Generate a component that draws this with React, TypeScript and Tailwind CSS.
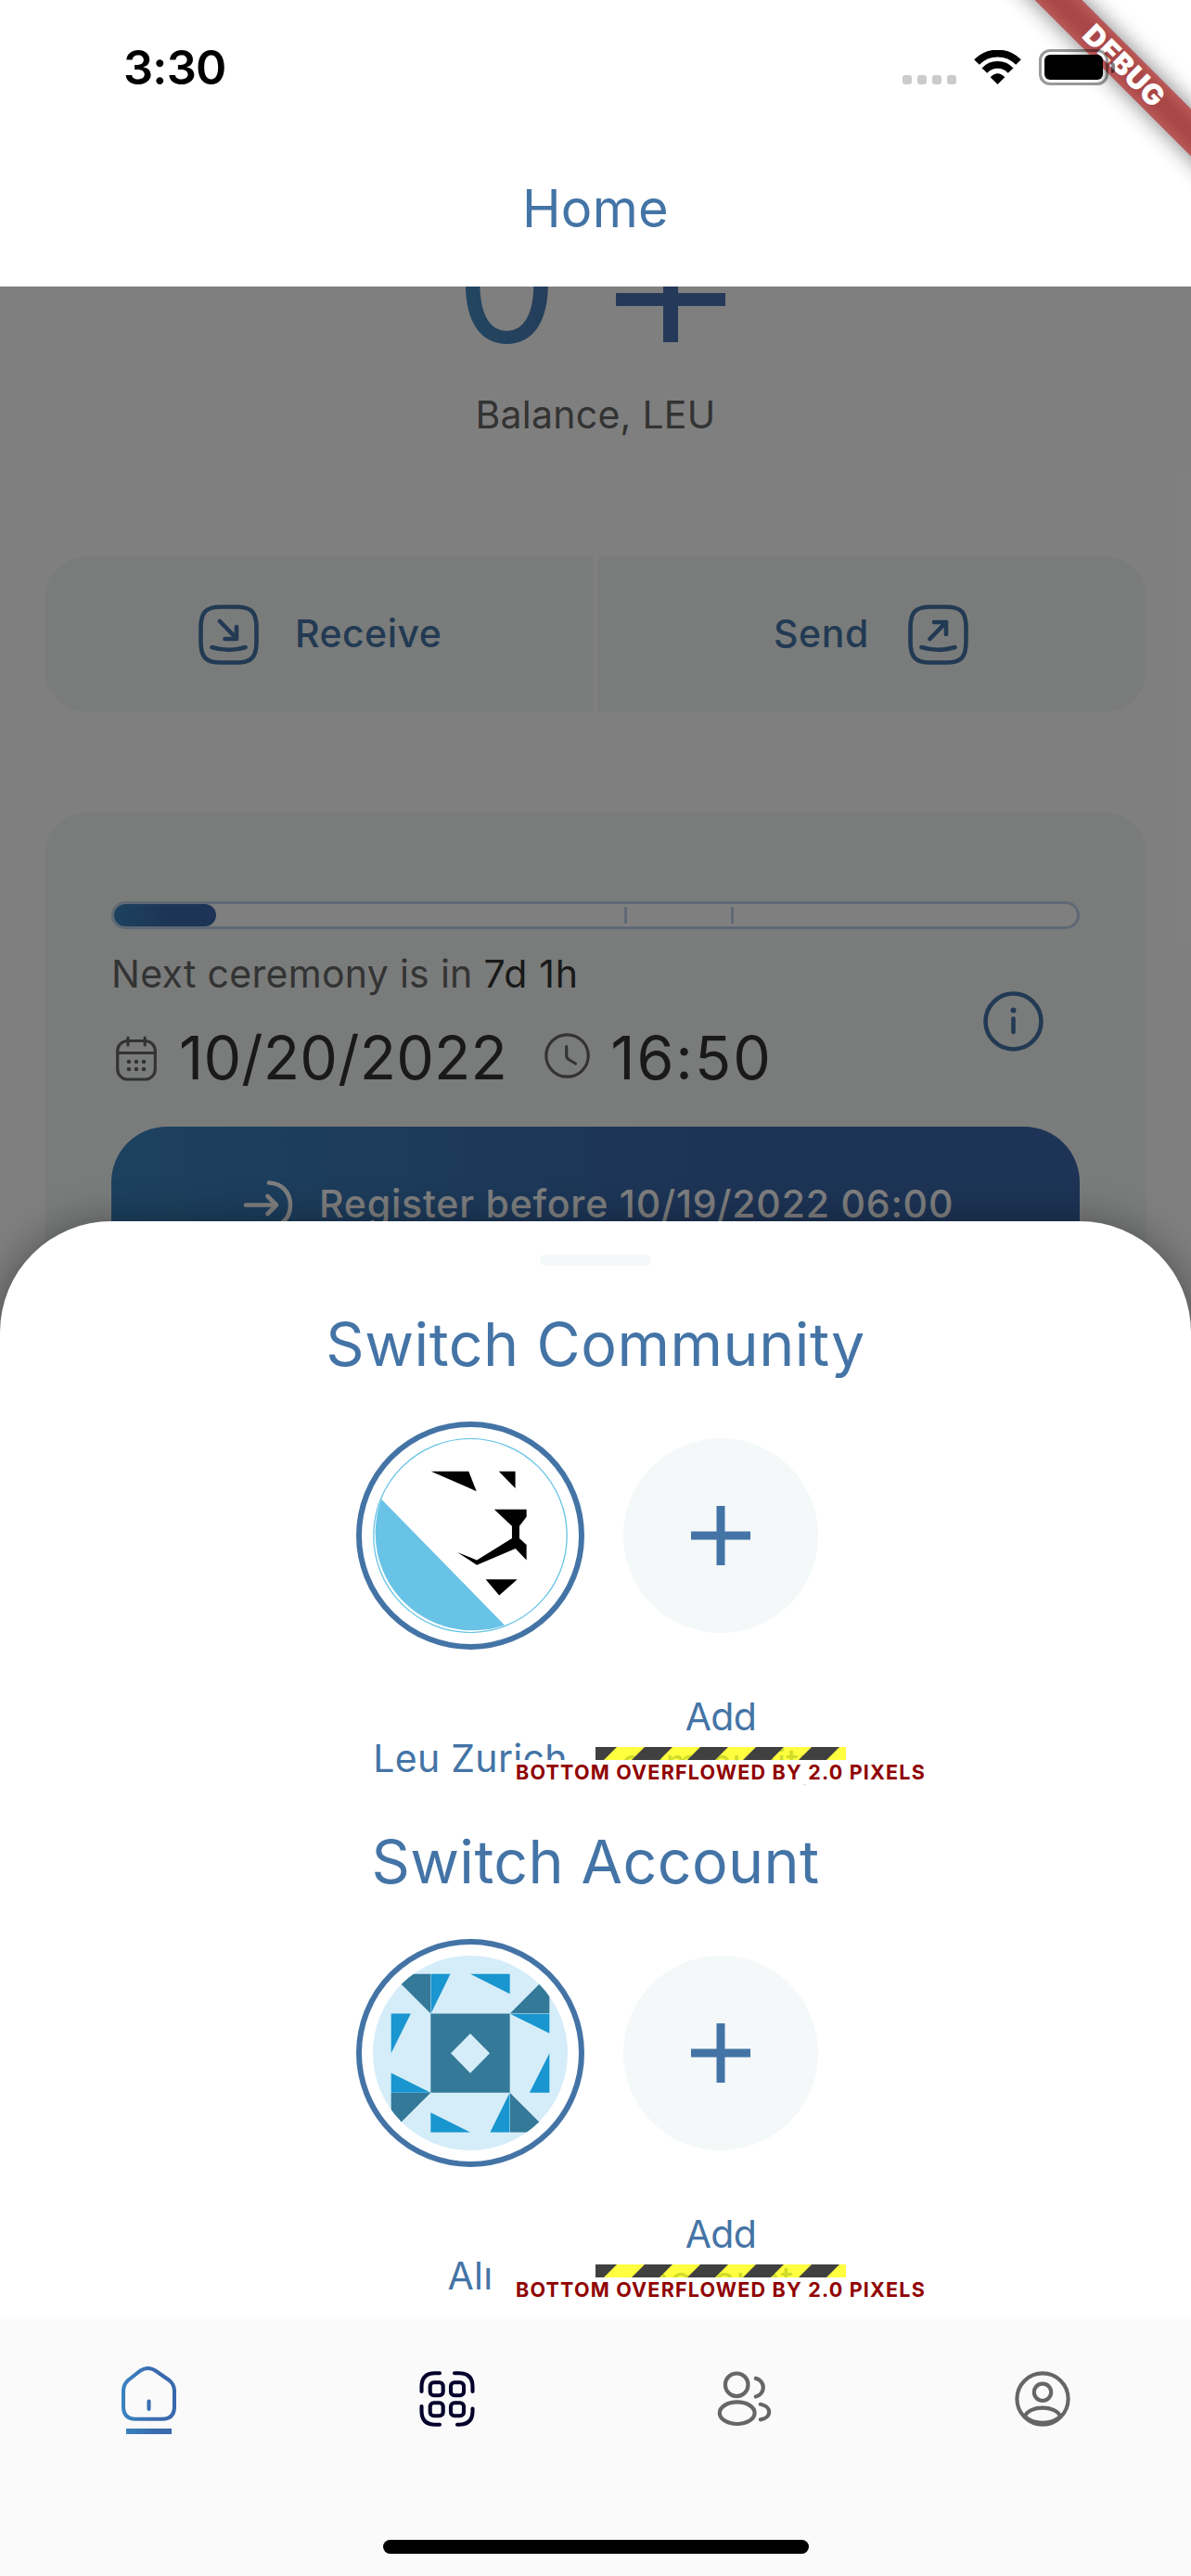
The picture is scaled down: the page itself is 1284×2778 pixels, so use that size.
import React from 'react';

function StatusBar() {
  return (
    <div className="flex h-[144px] items-start justify-between pl-[133px] pr-[82px]">
      <span className="mt-[43px] text-[50.5px] leading-[60px] font-semibold tracking-[-0.8px] text-black">3:30</span>
      <div className="mt-[53px] flex">
        <div className="mt-[28px] flex gap-[6px]">
          {[0, 1, 2, 3].map((i) => (
            <span key={i} className="size-[10px] rounded-[3px] bg-[#cbcbcb]" />
          ))}
        </div>
        <svg className="mt-px ml-[19px] h-[37px] w-[51px]" viewBox="0 0 51 37" fill="none" stroke="#000" strokeWidth="7.8">
          <path d="M3 13 A31.4 31.4 0 0 1 48 13" />
          <path d="M11.4 22.1 A19.2 19.2 0 0 1 39.6 22.1" />
          <path d="M25.5 37 L17.7 29.2 Q25.5 21.5 33.3 29.2 Z" fill="#000" stroke="none" />
        </svg>
        <div className="ml-[19px] flex h-[39px] w-[75px] rounded-[12px] border-3 border-black/40 p-[3px]">
          <span className="flex-1 rounded-[6px] bg-black" />
        </div>
        <span className="mt-[14px] ml-[3px] h-[12px] w-[4px] rounded-r-full bg-black/50" />
      </div>
    </div>
  );
}

function DebugBanner() {
  return (
    <div className="absolute top-0 right-0 size-[284px] overflow-hidden">
      <div className="absolute top-[53px] left-[12px] h-[36px] w-[400px] rotate-45 bg-black/50 blur-[12px]" />
      <div className="absolute top-[53px] left-[12px] h-[36px] w-[400px] rotate-45 bg-[#b71c1c]/63 text-center text-[31px] leading-[36px] font-black tracking-[0.5px] text-white">
        DEBUG
      </div>
    </div>
  );
}

function TransferIcon({ arrow }: { arrow: string }) {
  return (
    <svg className="size-[65px]" viewBox="0 0 65 65" fill="none" stroke="#4474a6" strokeWidth="4.6" strokeLinecap="round" strokeLinejoin="round">
      <path d="M2.5 25 C2.5 8 8 2.5 24 2.5 H41 C57 2.5 62.5 8 62.5 25 V40 C62.5 57 57 62.5 41 62.5 H24 C8 62.5 2.5 57 2.5 40 Z" />
      <path d={arrow} />
      <path d="M14.5 46 Q32.5 51.5 50.5 46" />
    </svg>
  );
}

function Background() {
  return (
    <div className="flex flex-col px-12">
      <div className="-mt-[82px] flex h-[164px] items-center justify-center gap-[63px] pr-[10px]">
        <span className="-mt-[7px] bg-linear-to-r from-[#448dc2] to-[#4a7cb6] bg-clip-text text-[174px] leading-[174px] text-transparent">0</span>
        <svg className="h-[120px] w-[118px]" viewBox="0 0 118 120" fill="#4a72b2">
          <path d="M51 0 H67 V67 H118 V81 H67 V120 H51 V81 H0 V67 H51 Z" />
        </svg>
      </div>
      <div className="mt-[31px] h-[50px] text-center text-[41px] leading-[50px] tracking-[0.25px] text-[#666]">Balance, LEU</div>

      <div className="mt-[128px] grid h-[168px] grid-cols-2 gap-[6px] text-[41px] font-medium text-[#4474a6]">
        <div className="flex items-center rounded-l-[45px] bg-[#f4f8f6] pl-[166px]">
          <TransferIcon arrow="M23 18 L41 36.5 M41 24 V37 H28.5" />
          <span className="-mt-px ml-[39px] tracking-[0.45px]">Receive</span>
        </div>
        <div className="flex items-center justify-end rounded-r-[45px] bg-[#f4f8f6] pr-[192px]">
          <span className="-mt-px mr-[42px] tracking-[0.6px]">Send</span>
          <TransferIcon arrow="M23.5 37 L41 19 M28 19 H41 V32" />
        </div>
      </div>

      <div className="mt-[108px] flex h-[900px] flex-col rounded-[45px] bg-[#f4f8f6] px-[72px] pt-[96px]">
        <div className="relative flex h-[30px] rounded-[15px] border-3 border-[#bed2e8] bg-white">
          <span className="w-[110px] rounded-[12px] bg-linear-to-r from-[#3983bf] to-[#3a69ad] to-55%" />
          <span className="absolute top-[3px] left-[550px] h-[18px] w-[3px] bg-[#bed2e8]" />
          <span className="absolute top-[3px] left-[665px] h-[18px] w-[3px] bg-[#bed2e8]" />
        </div>
        <div className="mt-[24px] flex h-[138px] justify-between">
          <div>
            <div className="-mt-px h-[51px] text-[41px] leading-[50px] tracking-[0.3px] text-[#666]">
              Next ceremony is in <span className="tracking-[0.7px] text-[#333]">7d 1h</span>
            </div>
            <div className="mt-[25px] flex h-[80px] items-center text-[64.5px] leading-[80px] text-[#333]">
              <svg className="ml-[5px] h-[49px] w-[44px]" viewBox="0 0 44 49" fill="none" stroke="#666" strokeWidth="3.2" strokeLinecap="round">
                <rect x="1.7" y="5.5" width="40.6" height="41.5" rx="11" />
                <path d="M2 18.5 H42 M13 2 V10 M31.2 2 V10" />
                <g fill="#666" stroke="none">
                  {[14, 22, 30].map((x) => (
                    <React.Fragment key={x}>
                      <circle cx={x} cy="28" r="2.3" />
                      <circle cx={x} cy="36" r="2.3" />
                    </React.Fragment>
                  ))}
                </g>
              </svg>
              <span className="ml-[24px] tracking-[0.2px]">10/20/2022</span>
              <svg className="-mt-[6px] ml-[40px] size-[49px]" viewBox="0 0 49 49" fill="none" stroke="#666" strokeWidth="3.2" strokeLinecap="round" strokeLinejoin="round">
                <circle cx="24.5" cy="24.5" r="22.7" />
                <path d="M23.7 14.5 V25 Q24 27 26 28.5 L33.5 33" />
              </svg>
              <span className="ml-[22px] tracking-[2px]">16:50</span>
            </div>
          </div>
          <svg className="mt-[43px] mr-[39px] size-[65px]" viewBox="0 0 65 65" fill="none" stroke="#4474a6" strokeWidth="4.6" strokeLinecap="round">
            <circle cx="32.5" cy="32.5" r="30" />
            <path d="M32.5 29.5 V44" />
            <circle cx="32.5" cy="20.5" r="3" fill="#4474a6" stroke="none" />
          </svg>
        </div>
        <div className="mt-[51px] flex h-[168px] items-center rounded-[60px] bg-linear-to-r from-[#3983bf] to-[#3a69ad] to-60% pl-[142px] text-[41px] leading-[50px] font-medium text-white">
          <svg className="h-[53px] w-[54px]" viewBox="0 0 54 53" fill="none" stroke="#fff" strokeWidth="4.6" strokeLinecap="round" strokeLinejoin="round">
            <path d="M3 26.5 H36 M26.5 17 L36 26.5 L26.5 36 M28 2.5 C42 3 51 13 51 26.5 S42 50 28 50.5" />
          </svg>
          <span className="-mt-[3px] ml-[28px] tracking-[0.8px] whitespace-nowrap">Register before 10/19/2022 06:00</span>
        </div>
      </div>
    </div>
  );
}

function LionLogo() {
  return (
    <svg className="size-full" viewBox="162 437 549 610" preserveAspectRatio="none">
      <ellipse cx="436.5" cy="742" rx="272.5" ry="303.5" fill="#fff" stroke="#68c3e6" strokeWidth="3.4" />
      <path d="M186 628 L533 1022 A274 305 0 0 1 186 628 Z" fill="#68c3e6" />
      <path d="M326 541 H432 L454 603 Z M517 541 H563.5 V594 Z M504 660 H595 V683 L575 712 V751 L595 771 V819 L564 783 L455 834 L400 794 L455 819 L554 751 V712 Z M480 879 H569 L518 929 Z" />
    </svg>
  );
}

function Identicon() {
  return (
    <svg className="size-full rounded-full bg-[#d5edf9]" viewBox="139 461 470 610" preserveAspectRatio="none">
      <path
        fill="#347998"
        d="M278.5 642.5 H469.5 V890.5 H278.5 Z M183 518.5 H278 V641.5 Z M565 518.5 V642 H470 Z M565 1014 H470 V891 Z M183 1014 V891 H278 Z"
      />
      <path fill="#d5edf9" d="M374 705 L421 767 L374 829 L327 767 Z" />
      <path
        fill="#1995cf"
        d="M279 518.5 H326 L279 642.5 Z M374 518.5 H469.5 V580.5 Z M470 643 H565 V704.5 Z M565 766.5 V890.5 H517 Z M469 891 V1014 H422 Z M278.5 952.5 L374 1014 H278.5 Z M183 828.5 L278.5 890 H183 Z M183 642.5 H230.5 L183 766.5 Z"
      />
    </svg>
  );
}

function Switcher({ title, titleClass, name, addLabel, children }: {
  title: string;
  titleClass: string;
  name: string;
  addLabel: string;
  children: React.ReactNode;
}) {
  return (
    <section className="h-[558px] text-[#4474a6]">
      <h2 className={`h-[80px] pt-px text-center text-[64.5px] leading-[80px] ${titleClass}`}>{title}</h2>
      <div className="mt-[44px] flex justify-center">
        <div className="flex w-[270px] flex-col items-center">
          <div className="size-[246px] rounded-full border-6 border-[#4474a6] p-[12px]">{children}</div>
          <span className="mt-[92px] text-[41px] leading-[50px] tracking-[0.3px] whitespace-nowrap">{name}</span>
        </div>
        <div className="relative flex w-[270px] flex-col items-center">
          <div className="mt-[18px] flex size-[210px] items-center justify-center rounded-full bg-[#f4f8f9]">
            <svg className="size-[64px]" viewBox="0 0 64 64" stroke="#4474a6" strokeWidth="9">
              <path d="M0 32 H64 M32 0 V64" />
            </svg>
          </div>
          <span className="mt-[65px] text-center text-[41px] leading-[50px]">
            <span className="tracking-[-0.6px]">Add</span>
            <br />
            {addLabel}
          </span>
          <div className="absolute top-[351px] left-0 h-[14px] w-[270px] overflow-hidden">
            <svg className="h-[14px] w-[270px]" viewBox="0 0 270 14">
              <rect width="270" height="14" fill="#ffff00" fillOpacity="0.75" />
              {[-7, 53, 113, 173, 233].map((x) => (
                <path key={x} d={`M${x} 0 H${x + 30} L${x + 16} 14 H${x - 14} Z`} fill="#404040" />
              ))}
            </svg>
          </div>
          <div className="absolute top-[365px] left-1/2 h-[26px] w-[444px] -translate-x-1/2 bg-white text-center text-[21.5px] leading-[26px] font-bold tracking-[1.2px] whitespace-nowrap text-[#900000]">
            BOTTOM OVERFLOWED BY 2.0 PIXELS
          </div>
        </div>
      </div>
    </section>
  );
}

function NavBar() {
  return (
    <nav className="relative h-[273px] bg-[#fafafa] shadow-[0_-1px_8px_rgba(0,0,0,0.06)]">
      <div className="grid grid-cols-4 justify-items-center pt-[47px]">
        <svg className="h-[74px] w-[59px]" viewBox="0 0 59 74" fill="none">
          <defs>
            <linearGradient id="active" gradientUnits="userSpaceOnUse" x1="0" y1="0" x2="59" y2="0">
              <stop offset="0.05" stopColor="#3983bf" />
              <stop offset="0.65" stopColor="#3a69ad" />
            </linearGradient>
          </defs>
          <path d="M2 27 Q2 19.5 7 15 L20.5 4.5 Q28.5 -0.5 36.5 4.5 L51.5 15 Q57 19.5 57 27 V43 Q57 56.7 44 56.7 H15 Q2 56.7 2 43 Z M29.5 37.5 V46" stroke="url(#active)" strokeWidth="4.1" strokeLinecap="round" />
          <rect x="5" y="67" width="49" height="6" fill="url(#active)" />
        </svg>
        <svg className="mt-[5px] size-[60px]" viewBox="0 0 60 60" fill="none" stroke="#04002b" strokeWidth="4.1" strokeLinecap="round">
          <path d="M22 2.3 H17 Q2.5 2.3 2.5 17 V22 M38 2.3 H43 Q57.5 2.3 57.5 17 V22 M2.5 38 V43 Q2.5 57.7 17 57.7 H22 M57.5 40.5 V43 Q57.5 57.7 43 57.7 H41" />
          <rect x="11.7" y="12.3" width="14" height="14" rx="4" />
          <rect x="34" y="12.3" width="14" height="14" rx="4" />
          <rect x="11.7" y="34.3" width="14" height="14" rx="4" />
          <rect x="34" y="34.3" width="14" height="14" rx="4" />
        </svg>
        <svg className="mt-[5px] size-[60px]" viewBox="-0.8 0 60 60" fill="none" stroke="#666" strokeWidth="4.2" strokeLinecap="round">
          <circle cx="20.4" cy="14.8" r="12.3" />
          <ellipse cx="20.9" cy="45.2" rx="18.9" ry="11.8" />
          <path d="M41 7.9 A10 10 0 0 1 41 27.5 M46 35.8 C58.5 38 58.5 50.5 46 52.3" />
        </svg>
        <svg className="mt-[5px] size-[60px]" viewBox="-30 -30 60 60" fill="none" stroke="#666" strokeWidth="4.1" strokeLinecap="round">
          <circle r="27.6" />
          <circle cy="-7.2" r="9.2" />
          <path d="M-19 19 C-17 12.5 -8 9.6 0 9.6 S17 12.5 19 19 C9 28 -9 28 -19 19 Z" />
        </svg>
      </div>
      <div className="absolute bottom-[24px] left-[413px] h-[15px] w-[459px] rounded-full bg-black" />
    </nav>
  );
}

export default function App() {
  return (
    <div className="relative flex h-[2778px] w-[1284px] flex-col overflow-hidden bg-white font-['Inter',sans-serif]">
      <header className="relative z-10 h-[309px] bg-white">
        <DebugBanner />
        <div className="relative">
          <StatusBar />
          <h1 className="mt-[51px] text-center text-[56px] leading-[60px] tracking-[0.3px] text-[#4474a6]">Home</h1>
        </div>
      </header>
      <main className="relative h-[2196px] overflow-hidden">
        <Background />
        <div className="absolute inset-0 bg-black/50" />
        <div className="absolute inset-x-0 top-[1008px] bottom-0 rounded-t-[120px] bg-white pt-[36px] shadow-[0_6px_48px_rgba(0,0,0,0.45)]">
          <div className="mx-auto mb-[44px] h-[12px] w-[120px] rounded-full bg-[#f4f8f9]" />
          <Switcher title="Switch Community" titleClass="tracking-[0.55px]" name="Leu Zurich" addLabel="community">
            <LionLogo />
          </Switcher>
          <Switcher title="Switch Account" titleClass="tracking-[0.4px]" name="Alı" addLabel="account">
            <Identicon />
          </Switcher>
        </div>
      </main>
      <NavBar />
    </div>
  );
}
